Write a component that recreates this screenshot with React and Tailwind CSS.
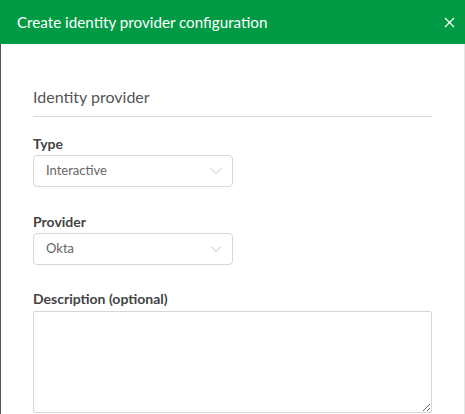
import React from "react";

function Chevron() {
  return (
    <svg width="12" height="8" viewBox="0 0 12 8" fill="none" stroke="#bdbdbd" strokeWidth="1">
      <path d="M1 1.5 L6 6.5 L11 1.5" />
    </svg>
  );
}

function Select({ value }) {
  return (
    <div className="flex h-[32px] w-[200px] items-center justify-between rounded-[4px] border border-[#d6d6d6] bg-white pl-[12px] pr-[10px] text-[13px] text-[#666]">
      <span>{value}</span>
      <Chevron />
    </div>
  );
}

export default function App() {
  return (
    <div className="h-[414px] w-[465px] overflow-hidden bg-white" style={{ fontFamily: "Lato, 'Open Sans', sans-serif" }}>
      <div className="flex h-[44px] items-center justify-between bg-[#009a44] pl-[17px] pr-[10px] text-[15.2px] text-white">
        <span>Create identity provider configuration</span>
        <svg width="11" height="11" viewBox="0 0 11 11" stroke="white" strokeWidth="1.3">
          <path d="M1 1 L10 10 M10 1 L1 10" />
        </svg>
      </div>
      <div className="flex h-[370px] flex-col border-l border-r border-l-[#555] border-r-[#e6e6e6] pl-[32px] pr-[32px] pt-[42px]">
        <div className="border-b border-[#d9d9d9] pb-[8px] text-[16px] leading-[22px] text-[#555]">Identity provider</div>
        <div className="mt-[18px] text-[14px] font-bold leading-[18px] text-[#444]">Type</div>
        <div className="mt-[2px]">
          <Select value="Interactive" />
        </div>
        <div className="mt-[26px] text-[14px] font-bold leading-[18px] text-[#444]">Provider</div>
        <div className="mt-[2px]">
          <Select value="Okta" />
        </div>
        <div className="mt-[25px] text-[14px] font-bold leading-[18px] text-[#444]">Description (optional)</div>
        <textarea className="mt-[3px] h-[102px] w-[399px] shrink-0 rounded-[2px] border border-[#d6d6d6] bg-white" />
      </div>
    </div>
  );
}
